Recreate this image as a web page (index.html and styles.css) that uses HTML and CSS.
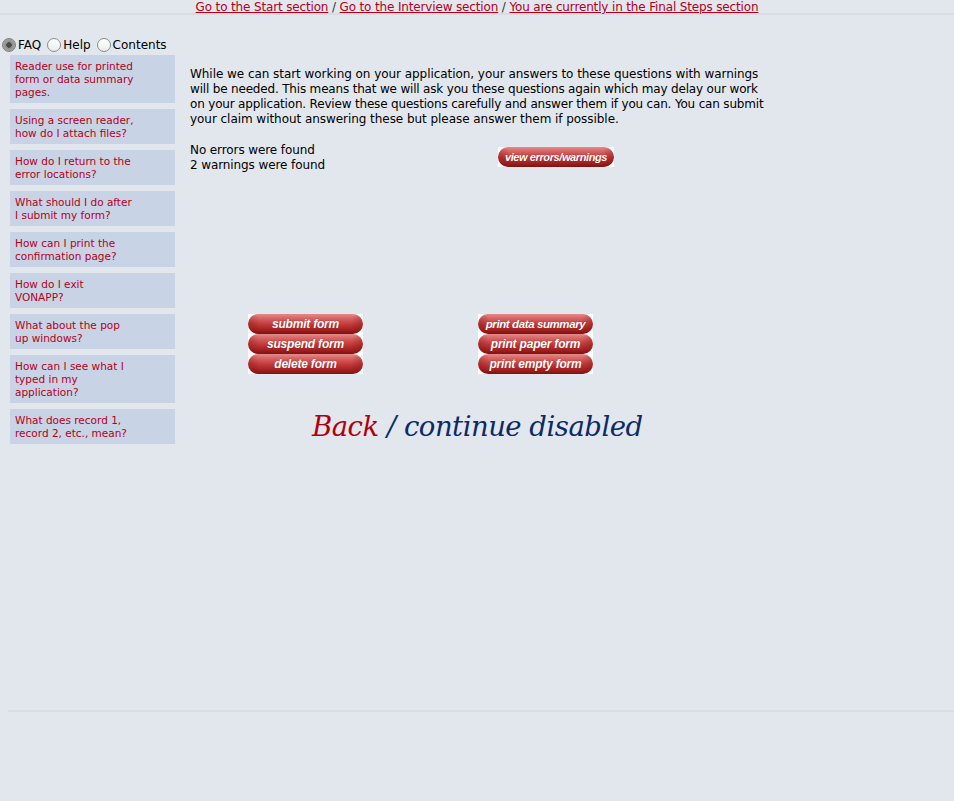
FILE: index.html
```html
<!DOCTYPE html>
<html>
<head>
<meta charset="utf-8">
<link rel="stylesheet" href="styles.css">
</head>
<body>
<div class="topnav">
  <a href="#">Go to the Start section</a> / <a href="#">Go to the Interview section</a> / <a href="#">You are currently in the Final Steps section</a>
</div>
<div class="layout">
  <div class="sidebar">
    <div class="tabs">
      <label class="tab"><span class="radio on"></span>FAQ</label>
      <label class="tab"><span class="radio"></span>Help</label>
      <label class="tab"><span class="radio"></span>Contents</label>
    </div>
    <div class="faq">
      <a class="faqitem" href="#">Reader use for printed<br>form or data summary<br>pages.</a>
      <a class="faqitem" href="#">Using a screen reader,<br>how do I attach files?</a>
      <a class="faqitem" href="#">How do I return to the<br>error locations?</a>
      <a class="faqitem" href="#">What should I do after<br>I submit my form?</a>
      <a class="faqitem" href="#">How can I print the<br>confirmation page?</a>
      <a class="faqitem" href="#">How do I exit<br>VONAPP?</a>
      <a class="faqitem" href="#">What about the pop<br>up windows?</a>
      <a class="faqitem" href="#">How can I see what I<br>typed in my<br>application?</a>
      <a class="faqitem" href="#">What does record 1,<br>record 2, etc., mean?</a>
    </div>
  </div>
  <div class="main">
    <p class="intro">While we can start working on your application, your answers to these questions with warnings<br><span class="tight">will be needed. This means that we will ask you these questions again which may delay our work</span><br><span class="tight">on your application. Review these questions carefully and answer them if you can. You can submit</span><br>your claim without answering these but please answer them if possible.</p>
    <div class="status">
      <div class="statustext">No errors were found<br>2 warnings were found</div>
      <span class="btnwrap btn-view"><span class="btn">view errors/warnings</span></span>
    </div>
    <div class="actions">
      <div class="btncol">
        <span class="btnwrap"><span class="btn">submit form</span></span>
        <span class="btnwrap"><span class="btn">suspend form</span></span>
        <span class="btnwrap"><span class="btn">delete form</span></span>
      </div>
      <div class="btncol">
        <span class="btnwrap"><span class="btn narrow">print data summary</span></span>
        <span class="btnwrap"><span class="btn">print paper form</span></span>
        <span class="btnwrap"><span class="btn">print empty form</span></span>
      </div>
    </div>
    <div class="nav"><a class="back" href="#">Back</a> / continue disabled</div>
  </div>
</div>
<div class="footer-rule"></div>
</body>
</html>
```
FILE: styles.css
```css
html, body {
  margin: 0;
  padding: 0;
  background: #e2e7ee;
}
body {
  font-family: "DejaVu Sans", Verdana, sans-serif;
  width: 954px;
  height: 801px;
  overflow: hidden;
}
a { color: #b3001b; }
.topnav {
  text-align: center;
  font-size: 12px;
  line-height: 14px;
  height: 13px;
  color: #333;
  border-bottom: 2px solid #d9dde3;
  letter-spacing: -0.15px;
}
.topnav a { color: #b3001b; text-decoration: underline; }
.layout {
  display: flex;
  padding-top: 22px;
}
.sidebar {
  width: 175px;
  flex: none;
}
.tabs {
  display: flex;
  align-items: center;
  gap: 6px;
  padding-left: 2px;
  font-size: 12px;
  color: #000;
  height: 16px;
}
.tab {
  display: flex;
  align-items: center;
}
.radio {
  width: 14px;
  height: 14px;
  border-radius: 50%;
  border: 1px solid #8c8c8c;
  background: linear-gradient(#ffffff, #ececec);
  box-sizing: border-box;
  margin-right: 2px;
}
.radio.on {
  background: radial-gradient(circle, #4a4a4a 0 2.5px, #8e8e8e 3px, #b5b5b5 100%);
  border-color: #7d7d7d;
}
.faq {
  display: flex;
  flex-direction: column;
  gap: 6px;
  padding-left: 10px;
  margin-top: 2px;
}
.faqitem {
  display: block;
  background: #c8d3e5;
  color: #b3001b;
  text-decoration: none;
  font-size: 10.5px;
  line-height: 13px;
  padding: 5px 5px 4px 5px;
  white-space: nowrap;
}
.main {
  padding-left: 15px;
  width: 620px;
}
.intro {
  margin: 30px 0 0 0;
  font-size: 12px;
  line-height: 15px;
  color: #000;
  white-space: nowrap;
  letter-spacing: -0.05px;
}
.intro .tight {
  letter-spacing: -0.18px;
}
.status {
  display: flex;
  align-items: flex-start;
  margin-top: 16px;
}
.statustext {
  font-size: 12px;
  line-height: 15px;
  width: 308px;
  letter-spacing: -0.1px;
}
.btnwrap {
  display: block;
  background: #fff;
  width: 115px;
  height: 20px;
}
.btn {
  display: flex;
  align-items: center;
  justify-content: center;
  height: 20px;
  border-radius: 10px;
  background:
    radial-gradient(ellipse 12px 16px at 0 50%, rgba(110,10,10,0.35), transparent),
    radial-gradient(ellipse 12px 16px at 100% 50%, rgba(110,10,10,0.35), transparent),
    linear-gradient(#e48a8a 0%, #d65e5e 25%, #c13636 55%, #a22020 80%, #7a1414 100%);
  color: #fff;
  font-family: "Liberation Sans", Arial, sans-serif;
  font-weight: bold;
  font-style: italic;
  font-size: 12px;
  letter-spacing: -0.2px;
  text-shadow: 0 0 1px rgba(90,0,0,0.5);
  white-space: nowrap;
}
.btn.narrow {
  font-size: 11.5px;
  letter-spacing: -0.4px;
}
.btn-view {
  width: 116px;
  margin-top: 4px;
}
.btn-view .btn {
  font-size: 11px;
  letter-spacing: -0.4px;
}
.actions {
  display: flex;
  margin-top: 141px;
  padding-left: 58px;
  gap: 115px;
}
.btncol {
  display: flex;
  flex-direction: column;
}
.nav {
  margin-top: 36px;
  padding-left: 122px;
  font-family: "DejaVu Serif", Georgia, serif;
  font-style: italic;
  font-size: 27.5px;
  color: #0d2a66;
  letter-spacing: -0.5px;
}
.nav .back {
  color: #b00010;
  text-decoration: none;
}
.footer-rule {
  position: absolute;
  left: 8px;
  right: 0;
  top: 710px;
  height: 2px;
  background: #d9dde3;
}
```
